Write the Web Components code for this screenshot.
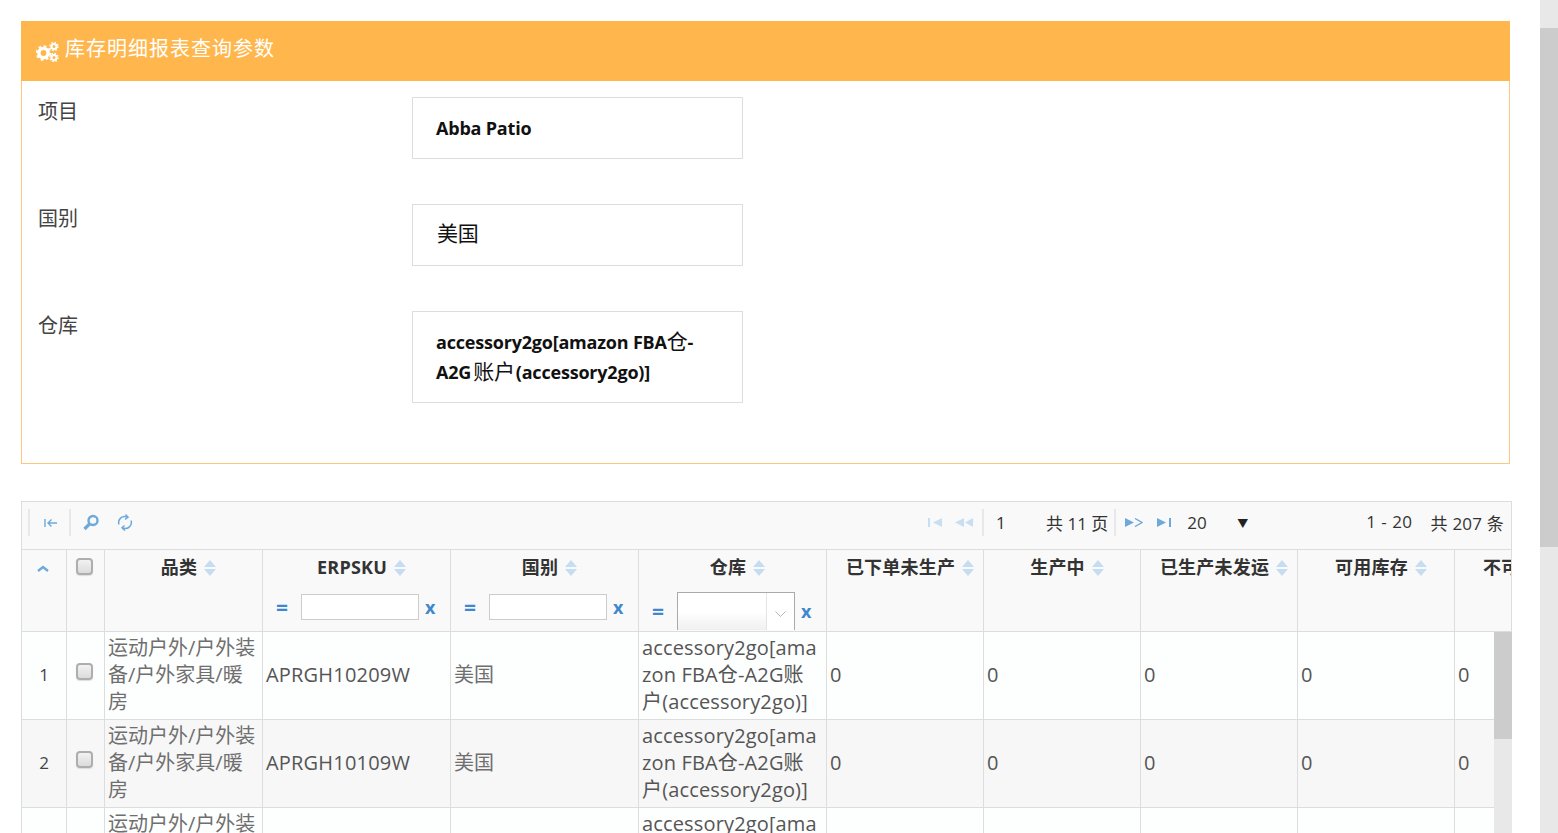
<!DOCTYPE html>
<html lang="zh-CN">
<head>
<meta charset="utf-8">
<title>库存明细报表</title>
<style>
  html, body { margin: 0; height: 100%; overflow: hidden; background: #fff; }
  body { font-family: "Open Sans", "Noto Sans CJK SC", sans-serif; }
  .cjk { font-weight: 400; font-size: 21px; line-height: 1; }
</style>
</head>
<body>
<report-page>
  <query-panel heading="库存明细报表查询参数">
    <query-field label="项目" height="62"><b>Abba Patio</b></query-field>
    <query-field label="国别" height="62"><span class="cjk" style="margin-left:1px;vertical-align:1px">美国</span></query-field>
    <query-field label="仓库" height="92"><b>accessory2go[amazon FBA<span class="cjk">仓</span>-A2G<span class="cjk" style="margin:0 1px 0 2px">账户</span>(accessory2go)]</b></query-field>
  </query-panel>
  <stock-grid></stock-grid>
</report-page>
<page-scrollbar></page-scrollbar>

<script>
const FONT = `"Open Sans", "Noto Sans CJK SC", sans-serif`;

class ReportPage extends HTMLElement {
  constructor() {
    super();
    this.attachShadow({ mode: "open" });
  }

  connectedCallback() {
    this.shadowRoot.innerHTML = `
      <style>
        :host {
          display: flex;
          flex-direction: column;
          gap: 37px;
          align-items: flex-start;
          padding: 21px 0 0 21px;
          height: 833px;
          box-sizing: border-box;
          overflow: hidden;
        }
      </style>
      <slot></slot>
    `;
  }
}

class QueryPanel extends HTMLElement {
  constructor() {
    super();
    this.attachShadow({ mode: "open" });
  }

  connectedCallback() {
    this.shadowRoot.innerHTML = `
      <style>
        :host {
          display: block;
          flex: none;
          box-sizing: border-box;
          width: 1489px;
          height: 443px;
          border: 1px solid #ffc67f;
          border-top: 0;
          font-family: ${FONT};
        }
        header {
          display: flex;
          align-items: center;
          gap: 6px;
          height: 60px;
          margin: 0 -1px;
          padding: 0 0 7px 15px;
          box-sizing: border-box;
          background: #ffb74d;
          color: #fff;
          font-size: 20px;
          letter-spacing: 1px;
        }
        svg { width: 23px; height: 22px; margin-top: 9px; flex: none; }
        .fields {
          display: flex;
          flex-direction: column;
          gap: 45px;
          padding: 16px 0 0 16px;
        }
      </style>
      <header>
        <svg viewBox="0 0 23 22" fill="none" stroke="#fff">
          <circle cx="7.5" cy="12" r="4.6" stroke-width="3.4"/>
          <circle cx="7.5" cy="12" r="6.8" stroke-width="2" stroke-dasharray="2.7 2.64"/>
          <circle cx="18" cy="5.5" r="2.5" stroke-width="2"/>
          <circle cx="18" cy="5.5" r="4" stroke-width="1.4" stroke-dasharray="1.6 1.54"/>
          <circle cx="18" cy="16.5" r="2.5" stroke-width="2"/>
          <circle cx="18" cy="16.5" r="4" stroke-width="1.4" stroke-dasharray="1.6 1.54"/>
        </svg>
        <span>${this.getAttribute("heading")}</span>
      </header>
      <div class="fields"><slot></slot></div>
    `;
  }
}

class QueryField extends HTMLElement {
  constructor() {
    super();
    this.attachShadow({ mode: "open" });
  }

  connectedCallback() {
    const h = this.getAttribute("height");
    this.shadowRoot.innerHTML = `
      <style>
        :host { display: flex; align-items: flex-start; }
        label {
          width: 374px;
          flex: none;
          padding-top: 1px;
          font-size: 20px;
          line-height: 27px;
          color: #444;
        }
        .box {
          box-sizing: border-box;
          width: 331px;
          height: ${h}px;
          display: flex;
          align-items: center;
          padding: 0 23px;
          border: 1px solid #ddd;
          background: #fff;
          color: #111;
          font-size: 18px;
          line-height: 30px;
          letter-spacing: -.2px;
        }
      </style>
      <label>${this.getAttribute("label")}</label>
      <div class="box"><span><slot></slot></span></div>
    `;
  }
}

const BLUE = "#6ea9dc";
const PALE = "#c8dff3";

const ICONS = {
  collapse: `<svg width="14" height="10" viewBox="0 0 14 10" fill="none" stroke="${BLUE}" stroke-width="1.4"><path d="M1 1v8M13 5H4M7.5 1.5 4 5l3.500 3.500"/></svg>`,
  search: `<svg width="18" height="17" viewBox="0 0 18 17" fill="none" stroke="${BLUE}"><circle cx="11" cy="6.500" r="4.500" stroke-width="2.400"/><path d="M7.500 10 2.500 15" stroke-width="3.200"/></svg>`,
  refresh: `<svg width="16" height="17" viewBox="0 0 16 17" fill="none" stroke="${BLUE}" stroke-width="1.500"><path d="M2 10.500A6 6 0 0 1 10 3"/><path d="M14 6.500A6 6 0 0 1 6 14"/><path d="M8.500 .5 11 3.200 8 5.500M7.500 11.500 5 13.800 8 16.500"/></svg>`,
  first: `<svg width="15" height="9" viewBox="0 0 15 9" fill="${PALE}"><rect x="0" width="2" height="9"/><path d="M14 0v9L5 4.500z"/></svg>`,
  prev: `<svg width="18" height="9" viewBox="0 0 18 9" fill="${PALE}"><path d="M9 0v9L0 4.500z"/><path d="M18 0v9L10 4.500z"/></svg>`,
  next: `<svg width="18" height="9" viewBox="0 0 18 9" fill="${BLUE}"><path d="M0 0v9L9 4.500z"/><path d="M10 .5 17 4.500 10 8.500" fill="none" stroke="${BLUE}" stroke-width="1.400"/></svg>`,
  last: `<svg width="15" height="9" viewBox="0 0 15 9" fill="${BLUE}"><path d="M0 0v9L9 4.500z"/><rect x="12" width="2" height="9"/></svg>`,
  up: `<svg width="12" height="7" viewBox="0 0 12 7" fill="none" stroke="${BLUE}" stroke-width="2.400"><path d="M1 6l5-4 5 4"/></svg>`,
  sort: `<svg width="12" height="16" viewBox="0 0 12 16" fill="#c6dcf0"><path d="M6 0l6 7H0zM0 9h12l-6 7z"/></svg>`,
  chevron: `<svg width="11" height="6" viewBox="0 0 11 6" fill="none" stroke="#b5b5b5" stroke-width="1"><path d="M.5 .5l5 5 5-5"/></svg>`,
};

class GridToolbar extends HTMLElement {
  constructor() {
    super();
    this.attachShadow({ mode: "open" });
  }

  connectedCallback() {
    this.shadowRoot.innerHTML = `
      <style>
        :host {
          display: flex;
          align-items: center;
          box-sizing: border-box;
          height: 48px;
          padding: 0 0 6px 6px;
          background: #f9f9f9;
          border-bottom: 1px solid #ddd;
          color: #333;
          font-size: 17px;
        }
        i { width: 2px; height: 27px; background: #e8e8e8; flex: none; }
        svg { display: block; flex: none; }
        .right { display: flex; gap: 18px; margin-left: auto; margin-right: 7px; }
        span { white-space: nowrap; }
      </style>
      <i></i>
      <span style="margin-left:14px">${ICONS.collapse}</span>
      <i style="margin-left:11px"></i>
      <span style="margin-left:11px">${ICONS.search}</span>
      <span style="margin-left:17px">${ICONS.refresh}</span>
      <span style="margin-left:795px">${ICONS.first}</span>
      <span style="margin-left:12px">${ICONS.prev}</span>
      <i style="margin-left:9px"></i>
      <span style="margin-left:12px;width:50px">1</span>
      <span>共 11 页</span>
      <i style="margin-left:6px"></i>
      <span style="margin-left:9px">${ICONS.next}</span>
      <span style="margin-left:14px">${ICONS.last}</span>
      <span style="margin-left:15px;width:50px">20</span>
      <span style="font-size:11px;color:#222">▼</span>
      <div class="right"><span style="letter-spacing:.5px">1 - 20</span><span style="letter-spacing:.2px">共 207 条</span></div>
    `;
  }
}

class StockGrid extends HTMLElement {
  constructor() {
    super();
    this.attachShadow({ mode: "open" });
  }

  connectedCallback() {
    const columns = ["品类", "ERPSKU", "国别", "仓库", "已下单未生产", "生产中", "已生产未发运", "可用库存", "不可用库存"];
    const rows = [
      ["1", "APRGH10209W"],
      ["2", "APRGH10109W"],
      ["3", "APRGH10309W"],
    ];
    const head = columns.map((name, i) => {
      let filter = "";
      if (i === 1 || i === 2) {
        filter = `<div class="filter"><b>=</b><span class="text-filter"></span><b>x</b></div>`;
      } else if (i === 3) {
        filter = `<div class="filter combo"><b>=</b><span class="select"><em></em><u>${ICONS.chevron}</u></span><b>x</b></div>`;
      }
      return `<div class="cell th"><div class="title">${name}${ICONS.sort}</div>${filter}</div>`;
    }).join("");
    const body = rows.map(([n, sku], i) => {
      const alt = i % 2 ? "alt" : "";
      return `
      <div class="cell num ${alt}">${n}</div>
      <div class="cell chk ${alt}"><span class="box"></span></div>
      <div class="cell soft ${alt}"><span>运动户外/户外装备/户外家具/暖房</span></div>
      <div class="cell sku ${alt}"><span>${sku}</span></div>
      <div class="cell soft ${alt}"><span>美国</span></div>
      <div class="cell wh ${alt}"><span>accessory2go[amazon FBA仓-A2G账户(accessory2go)]</span></div>
      ${[0, 1, 2, 3, 4].map(() => `<div class="cell ${alt}"><span>0</span></div>`).join("")}
    `;
    }).join("");

    this.shadowRoot.innerHTML = `
      <style>
        :host {
          display: block;
          flex: none;
          position: relative;
          box-sizing: border-box;
          width: 1491px;
          height: 340px;
          border: 1px solid #ddd;
          border-bottom: 0;
          font-family: ${FONT};
        }
        .scroller { overflow: hidden; height: 100%; }
        .grid {
          display: grid;
          width: 1590px;
          grid-template-columns: 45px 38px 158px 188px 188px 188px 157px 157px 157px 157px 157px;
          grid-template-rows: 82px 88px 88px 88px;
        }
        .cell {
          box-sizing: border-box;
          display: flex;
          align-items: center;
          padding: 0 3px 2px;
          border-right: 1px solid #ddd;
          border-bottom: 1px solid #ddd;
          background: #fdfefe;
          color: #555;
          font-size: 20px;
          line-height: 27px;
          word-break: break-all;
        }
        .cell.alt { background: #f7f7f7; }
        .soft { color: #6f6f6f; }
        .sku { letter-spacing: .2px; }
        .wh { padding-right: 7px; letter-spacing: .15px; }
        .th {
          display: block;
          padding: 6px 0 0;
          background: #f9f9f9;
          color: #333;
          font-size: 18px;
          font-weight: 700;
        }
        .th.plain { padding: 0; }
        .title {
          display: flex;
          justify-content: center;
          align-items: center;
          gap: 7px;
          height: 23px;
          padding-left: 10px;
          white-space: nowrap;
          letter-spacing: .2px;
        }
        .num { justify-content: center; font-size: 17px; color: #444; }
        .chk { justify-content: center; padding: 0 3px 9px 0; }
        .box {
          box-sizing: border-box;
          display: block;
          width: 17px;
          height: 17px;
          border: 2px solid #aeaeae;
          border-radius: 4px;
          background: linear-gradient(#f2f2f2, #dcdcdc);
          box-shadow: 0 1px 1px #ddd;
        }
        .filter {
          display: flex;
          align-items: center;
          margin-top: 15px;
          padding-left: 13px;
          color: #3f87cf;
          font-size: 18px;
        }
        .filter b { font-weight: 700; line-height: 26px; }
        .filter b:first-child { width: 25px; font-size: 21px; }
        .text-filter {
          box-sizing: border-box;
          width: 118px;
          height: 26px;
          margin-right: 6px;
          border: 1px solid #ccc;
          background: #fff;
        }
        .combo { margin-top: 13px; }
        .select {
          box-sizing: border-box;
          display: flex;
          width: 118px;
          height: 38px;
          margin-right: 6px;
          border: 1px solid #aaa;
          border-bottom: 0;
          background: linear-gradient(#fff 50%, #f0f0f0);
        }
        .select em { flex: 1; border-right: 1px solid #e4e4e4; }
        .select u { display: flex; width: 27px; align-items: center; justify-content: center; background: #fff; padding-top: 5px; }
        .corner { display: flex; justify-content: center; padding-top: 15px; }
        .corner svg { display: block; margin-right: 3px; }
        .corner-chk { display: flex; justify-content: center; padding: 8px 3px 0 0; }
        .track {
          position: absolute;
          right: -1px;
          top: 130px;
          bottom: 0;
          width: 18px;
          background: #e8e8e8;
        }
        .thumb { height: 107px; background: #ccc; }
      </style>
      <grid-toolbar></grid-toolbar>
      <div class="scroller">
        <div class="grid">
          <div class="cell th plain"><div class="corner">${ICONS.up}</div></div>
          <div class="cell th plain"><div class="corner-chk"><span class="box"></span></div></div>
          ${head}
          ${body}
        </div>
      </div>
      <div class="track"><div class="thumb"></div></div>
    `;
  }
}

class PageScrollbar extends HTMLElement {
  constructor() {
    super();
    this.attachShadow({ mode: "open" });
  }

  connectedCallback() {
    this.shadowRoot.innerHTML = `
      <style>
        :host {
          position: fixed;
          top: 0;
          right: 0;
          bottom: 0;
          width: 18px;
          background: #e8e8e8;
        }
        div { margin-top: 28px; height: 519px; background: #ccc; }
      </style>
      <div></div>
    `;
  }
}

customElements.define("report-page", ReportPage);
customElements.define("query-panel", QueryPanel);
customElements.define("query-field", QueryField);
customElements.define("grid-toolbar", GridToolbar);
customElements.define("stock-grid", StockGrid);
customElements.define("page-scrollbar", PageScrollbar);
</script>
</body>
</html>
